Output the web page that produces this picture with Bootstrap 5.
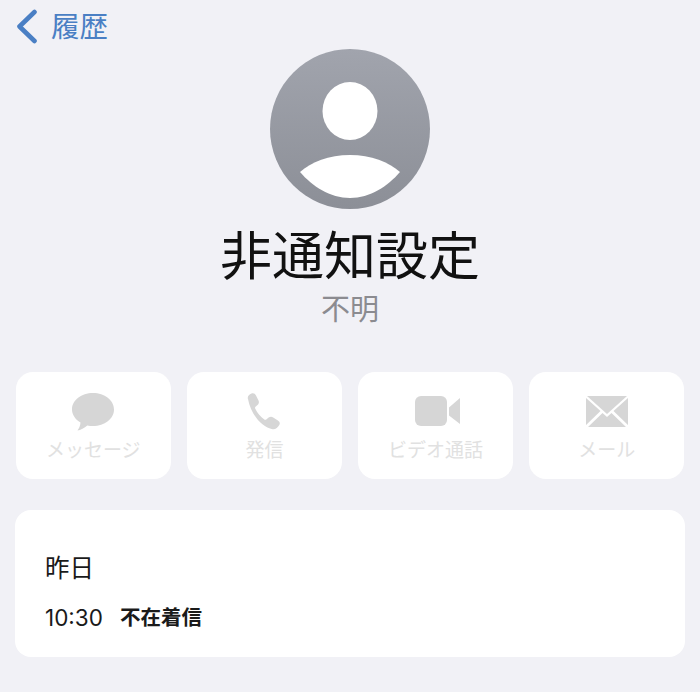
<!DOCTYPE html>
<html lang="ja">
<head>
  <meta charset="UTF-8" />
  <title>履歴</title>
  <link href="https://cdn.jsdelivr.net/npm/bootstrap@5.3.0/dist/css/bootstrap.min.css" rel="stylesheet">
  <style>
    html, body { height: 100%; }
    body {
      background: #f1f1f6;
      font-family: "Inter", "Noto Sans CJK JP", sans-serif;
      overflow: hidden;
    }
    .page-wrap { padding: 0 16px; width: 700px; height: 692px; }
    .top-bar { height: 49px; padding-top: 8px; color: #4a7fc4; font-size: 28.5px; line-height: 38px; text-decoration: none; }
    .top-bar svg { margin: 0 12px 0 -1px; }
    .avatar-icon { display: block; }
    .caller-name { font-size: 52px; line-height: 60px; font-weight: 400; color: #111; margin: 18px 0 0; }
    .caller-sub { font-size: 29px; line-height: 40px; color: #8b8b90; margin-top: 3px; }
    .action-row { margin-top: 42px; gap: 16.5px; }
    .action-btn {
      flex: 1 1 0;
      height: 107px;
      background: #fff;
      border-radius: 17px;
      color: #e1e1e1;
      font-size: 19px;
      line-height: 26px;
      padding-top: 21px;
    }
    .action-ico { height: 39px; margin-bottom: 6px; }
    .action-ico-video { margin-left: 4px; }
    .history-card {
      margin: 31px -1px 0;
      height: 147px;
      background: #fff;
      border-radius: 16px;
      padding: 41px 30px 0;
      color: #1a1a1a;
    }
    .day-label { font-size: 24.5px; line-height: 34px; }
    .call-line { margin-top: 18px; font-size: 22.5px; line-height: 30px; }
    .call-time { width: 75px; }
    .call-state { font-size: 20.5px; font-weight: 700; }
  </style>
</head>
<body>
  <div class="page-wrap">
    <a class="top-bar d-flex align-items-start" href="#">
      <svg width="24" height="36" viewBox="0 0 24 36" fill="none" class="flex-shrink-0"><path d="M19.5 4 4.500 18.500 19.500 33" stroke="#4a7fc4" stroke-width="4.6" stroke-linecap="round" stroke-linejoin="round"/></svg>
      <span>履歴</span>
    </a>

    <div class="d-flex flex-column align-items-center">
      <svg class="avatar-icon" width="160" height="160" viewBox="0 0 160 160">
        <defs>
          <linearGradient id="avatarFill" x1="0" y1="0" x2="0" y2="1">
            <stop offset="0" stop-color="#a1a4ad"/>
            <stop offset="1" stop-color="#8c8f97"/>
          </linearGradient>
        </defs>
        <circle cx="80" cy="80" r="80" fill="url(#avatarFill)"/>
        <ellipse cx="80" cy="62" rx="27.500" ry="29" fill="#fff"/>
        <path d="M30 123C41 113 59 106 80 106s39 7 50 17c-12 14-30 26-50 26s-38-12-50-26Z" fill="#fff"/>
      </svg>
      <h1 class="caller-name">非通知設定</h1>
      <div class="caller-sub">不明</div>
    </div>

    <div class="action-row d-flex">
      <div class="action-btn d-flex flex-column align-items-center">
        <svg class="action-ico" width="42" height="39" viewBox="0 0 42 39"><path d="M21 0C32.600 0 42 7.200 42 16.500S32.600 33 21 33c-2 0-3.900-.2-5.700-.6C12.500 35 8.500 37 5.500 37.500c1.500-2 2.800-5 3-8C3.400 26.400 0 21.800 0 16.500 0 7.200 9.400 0 21 0Z" fill="#d6d6d6"/></svg>
        <span>メッセージ</span>
      </div>
      <div class="action-btn d-flex flex-column align-items-center">
        <svg class="action-ico" width="36" height="39" viewBox="0 0 36 39"><path d="M2 6C1 4 3 1.500 5.500.5 7.500-.3 9 .5 10 2.500l2.500 5c.8 1.800.3 3.300-1 4.500l-2 1.800c-.6.6-.6 1.300-.2 2 2.200 4.400 5.200 8 9 10.700.7.500 1.400.400 2-.1l2.300-1.800c1.500-1.100 3-1.200 4.600-.2l4.700 3c1.800 1.200 2.400 2.800 1.400 4.600-1.300 2.400-4 4.600-6.600 4.200C15.500 34.500 5 21.500 2 6Z" fill="#d6d6d6"/></svg>
        <span>発信</span>
      </div>
      <div class="action-btn d-flex flex-column align-items-center">
        <svg class="action-ico action-ico-video" width="46" height="39" viewBox="0 0 46 39"><rect x="0" y="3" width="32" height="30" rx="6" fill="#d6d6d6"/><path d="M34 14.500 45 5v26L34 22.500Z" fill="#d6d6d6"/></svg>
        <span>ビデオ通話</span>
      </div>
      <div class="action-btn d-flex flex-column align-items-center">
        <svg class="action-ico" width="42" height="39" viewBox="0 0 42 39"><path d="M1 3h40L21 21Z" fill="#d6d6d6"/><path d="M0 5v27l14.500-14ZM42 5v27L27.500 18Z" fill="#d6d6d6"/><path d="M2 34h38L25.500 20 21 24l-4.500-4Z" fill="#d6d6d6"/></svg>
        <span>メール</span>
      </div>
    </div>

    <div class="history-card">
      <div class="day-label">昨日</div>
      <div class="call-line d-flex align-items-center">
        <span class="call-time">10:30</span>
        <span class="call-state">不在着信</span>
      </div>
    </div>
  </div>
  <script src="https://cdn.jsdelivr.net/npm/bootstrap@5.3.0/dist/js/bootstrap.bundle.min.js"></script>
</body>
</html>
